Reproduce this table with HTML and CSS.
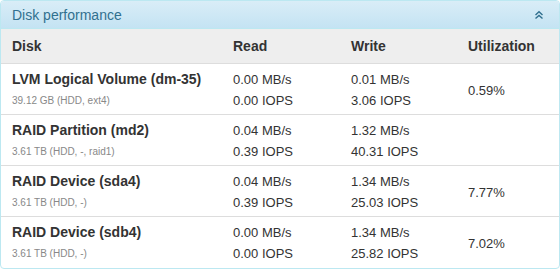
FILE: index.html
```html
<!DOCTYPE html>
<html>
<head>
<meta charset="utf-8">
<link rel="stylesheet" href="styles.css">
</head>
<body>
<div class="panel">
  <div class="panel-heading">
    <span class="title">Disk performance</span>
    <svg class="collapse" width="10" height="10" viewBox="0 0 10 10">
      <path d="M1.5 5 L5 1.8 L8.5 5 M1.5 8.6 L5 5.4 L8.5 8.6" fill="none" stroke="#31708f" stroke-width="1.4"/>
    </svg>
  </div>
  <div class="table">
    <div class="row head">
      <div>Disk</div><div>Read</div><div>Write</div><div>Utilization</div>
    </div>
    <div class="row">
      <div><div class="name">LVM Logical Volume (dm-35)</div><div class="sub">39.12 GB (HDD, ext4)</div></div>
      <div><div>0.00 MB/s</div><div>0.00 IOPS</div></div>
      <div><div>0.01 MB/s</div><div>3.06 IOPS</div></div>
      <div class="util">0.59%</div>
    </div>
    <div class="row">
      <div><div class="name">RAID Partition (md2)</div><div class="sub">3.61 TB (HDD, -, raid1)</div></div>
      <div><div>0.04 MB/s</div><div>0.39 IOPS</div></div>
      <div><div>1.32 MB/s</div><div>40.31 IOPS</div></div>
      <div class="util"></div>
    </div>
    <div class="row">
      <div><div class="name">RAID Device (sda4)</div><div class="sub">3.61 TB (HDD, -)</div></div>
      <div><div>0.04 MB/s</div><div>0.39 IOPS</div></div>
      <div><div>1.34 MB/s</div><div>25.03 IOPS</div></div>
      <div class="util">7.77%</div>
    </div>
    <div class="row last">
      <div><div class="name">RAID Device (sdb4)</div><div class="sub">3.61 TB (HDD, -)</div></div>
      <div><div>0.00 MB/s</div><div>0.00 IOPS</div></div>
      <div><div>1.34 MB/s</div><div>25.82 IOPS</div></div>
      <div class="util">7.02%</div>
    </div>
  </div>
</div>
</body>
</html>
```
FILE: styles.css
```css
html, body {
  margin: 0;
  padding: 0;
  background: #fff;
}
body {
  font-family: "Liberation Sans", Arial, sans-serif;
  font-size: 13px;
  color: #333;
}
.panel {
  width: 560px;
  height: 269px;
  box-sizing: border-box;
  border: 1px solid #bce8f1;
  border-radius: 4px;
  overflow: hidden;
}
.panel-heading {
  height: 27px;
  border-bottom: 1px solid #bce8f1;
  background: linear-gradient(to bottom, #d9edf7 0, #c4e3f3 100%);
  display: flex;
  align-items: center;
  justify-content: space-between;
  padding: 0 15px 0 11px;
  color: #31708f;
  font-size: 14px;
}
.collapse {
  display: block;
}
.row {
  display: grid;
  grid-template-columns: 221px 118px 117px 1fr;
  padding: 5px 11px 3px;
  line-height: 21px;
  border-bottom: 1px solid #ddd;
  align-items: center;
}
.row.last {
  border-bottom: none;
}
.row.head {
  background: #eee;
  font-weight: bold;
  font-size: 14px;
  padding: 7px 11px 7px;
  line-height: 20px;
}
.name {
  font-weight: bold;
  font-size: 14px;
}
.sub {
  font-size: 10px;
  color: #888;
}
```
